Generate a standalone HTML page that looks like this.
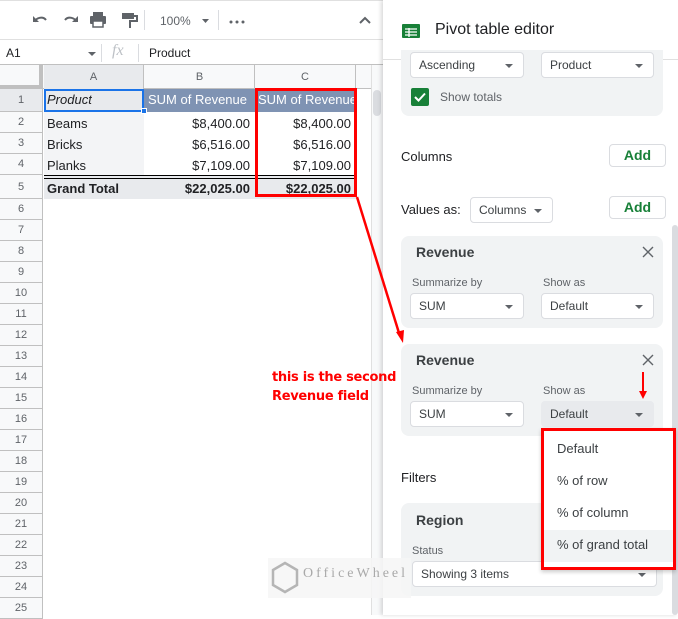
<!DOCTYPE html><html><head><style>
*{box-sizing:border-box;margin:0;padding:0}
body{width:678px;height:615px;overflow:hidden;background:#fff;font-family:"Liberation Sans",Arial,sans-serif;position:relative;color:#202124}
.a{position:absolute}
.rh{position:absolute;left:0;width:43px;background:#f8f9fa;border-bottom:1px solid #c0c0c0;border-right:1px solid #c0c0c0;color:#5f6368;font-size:11px;text-align:center}
.cell{position:absolute;font-size:13px;white-space:nowrap;overflow:hidden}
.dd{position:absolute;background:#fff;border:1px solid #dadce0;border-radius:4px;font-size:12px;color:#3c4043;padding-left:8px;line-height:24px}
.dd:after{content:"";position:absolute;right:10px;top:11px;border-left:4px solid transparent;border-right:4px solid transparent;border-top:4px solid #5f6368}
.card{position:absolute;left:401px;width:262px;background:#f1f3f4;border-radius:8px}
.lbl{position:absolute;font-size:11px;color:#5f6368}
.btn{position:absolute;border:1px solid #dadce0;border-radius:4px;color:#188038;font-size:14px;font-weight:bold;text-align:center;line-height:20px;background:#fff}
</style></head><body>
<!-- toolbar -->
<div class="a" style="left:0;top:0;width:383px;height:40px;border-bottom:1px solid #e0e0e0;border-top:1px solid #e0e0e0"></div>
<svg class="a" style="left:30px;top:10px" width="220" height="20" viewBox="0 0 220 20">
<path d="M5 12 a6 5 0 0 1 11 -2" fill="none" stroke="#5f6368" stroke-width="2"/><path d="M3 6v6h6" fill="#5f6368"/>
<path d="M46 12 a6 5 0 0 0 -11 -2" fill="none" stroke="#5f6368" stroke-width="2"/><path d="M48 6v6h-6" fill="#5f6368"/>
<rect x="60" y="6" width="16" height="8" rx="1" fill="#5f6368"/><rect x="63" y="2" width="10" height="4" fill="#5f6368"/><rect x="63" y="11" width="10" height="6" fill="#fff" stroke="#5f6368" stroke-width="1.5"/>
<rect x="92" y="3" width="12" height="6" fill="#5f6368"/><path d="M104 6h3v5h-7v7" fill="none" stroke="#5f6368" stroke-width="2"/>
<rect x="114" y="0" width="1" height="20" fill="#dadce0"/>
<text x="130" y="15" font-size="12" fill="#5f6368" font-family="Liberation Sans">100%</text>
<path d="M172 9h7l-3.5 4z" fill="#5f6368"/>
<rect x="188" y="0" width="1" height="20" fill="#dadce0"/>
<circle cx="201" cy="12" r="1.5" fill="#5f6368"/><circle cx="207" cy="12" r="1.5" fill="#5f6368"/><circle cx="213" cy="12" r="1.5" fill="#5f6368"/>
</svg>
<svg class="a" style="left:358px;top:15px" width="14" height="10"><path d="M2 8l5-5 5 5" fill="none" stroke="#5f6368" stroke-width="2"/></svg>
<!-- formula bar -->
<div class="a" style="left:0;top:41px;width:383px;height:24px;border-bottom:1px solid #c0c0c0"></div>
<div class="a" style="left:6px;top:46px;font-size:12px">A1</div>
<div class="a" style="left:88px;top:52px;border-left:4px solid transparent;border-right:4px solid transparent;border-top:4px solid #5f6368"></div>
<div class="a" style="left:101px;top:44px;width:1px;height:18px;background:#dadce0"></div>
<div class="a" style="left:112px;top:42px;font-size:16px;color:#bdc1c6;font-style:italic;font-family:'Liberation Serif',serif">fx</div>
<div class="a" style="left:138px;top:44px;width:1px;height:18px;background:#dadce0"></div>
<div class="a" style="left:149px;top:46px;font-size:12px">Product</div>
<!-- column headers -->
<div class="a" style="left:0;top:65px;width:371px;height:24px;background:#f8f9fa;border-bottom:1px solid #c0c0c0"></div>
<div class="a" style="left:0;top:65px;width:43px;height:24px;border-right:4px solid #c0c0c0;border-bottom:4px solid #c0c0c0;background:#f8f9fa"></div>
<div class="a" style="left:44px;top:65px;width:100px;height:24px;border-right:1px solid #c0c0c0;font-size:11px;color:#5f6368;text-align:center;line-height:24px;background:#e8eaed">A</div>
<div class="a" style="left:145px;top:65px;width:110px;height:24px;border-right:1px solid #c0c0c0;font-size:11px;color:#5f6368;text-align:center;line-height:24px">B</div>
<div class="a" style="left:255px;top:65px;width:101px;height:24px;border-right:1px solid #c0c0c0;font-size:11px;color:#5f6368;text-align:center;line-height:24px">C</div>
<!-- row numbers -->
<div class="rh" style="top:89px;height:23px;line-height:22px;background:#e8eaed">1</div>
<div class="rh" style="top:112px;height:21px;line-height:20px">2</div>
<div class="rh" style="top:133px;height:21px;line-height:20px">3</div>
<div class="rh" style="top:154px;height:21px;line-height:20px">4</div>
<div class="rh" style="top:175px;height:24px;line-height:24px">5</div>
<div class="rh" style="top:199px;height:21px;line-height:20px">6</div>
<div class="rh" style="top:220px;height:21px;line-height:20px">7</div>
<div class="rh" style="top:241px;height:21px;line-height:20px">8</div>
<div class="rh" style="top:262px;height:21px;line-height:20px">9</div>
<div class="rh" style="top:283px;height:21px;line-height:20px">10</div>
<div class="rh" style="top:304px;height:21px;line-height:20px">11</div>
<div class="rh" style="top:325px;height:21px;line-height:20px">12</div>
<div class="rh" style="top:346px;height:21px;line-height:20px">13</div>
<div class="rh" style="top:367px;height:21px;line-height:20px">14</div>
<div class="rh" style="top:388px;height:21px;line-height:20px">15</div>
<div class="rh" style="top:409px;height:21px;line-height:20px">16</div>
<div class="rh" style="top:430px;height:21px;line-height:20px">17</div>
<div class="rh" style="top:451px;height:21px;line-height:20px">18</div>
<div class="rh" style="top:472px;height:21px;line-height:20px">19</div>
<div class="rh" style="top:493px;height:21px;line-height:20px">20</div>
<div class="rh" style="top:514px;height:21px;line-height:20px">21</div>
<div class="rh" style="top:535px;height:21px;line-height:20px">22</div>
<div class="rh" style="top:556px;height:21px;line-height:20px">23</div>
<div class="rh" style="top:577px;height:21px;line-height:20px">24</div>
<div class="rh" style="top:598px;height:21px;line-height:20px">25</div>
<!-- table -->
<div class="a" style="left:44px;top:89px;width:100px;height:110px;background:#e8eaed"></div>
<div class="a" style="left:44px;top:112px;width:100px;height:63px;background:#f3f4f6"></div>
<div class="a" style="left:144px;top:89px;width:212px;height:23px;background:#7f93b3"></div>
<div class="a" style="left:144px;top:175px;width:212px;height:24px;background:#e8eaed"></div>
<div class="a" style="left:44px;top:175px;width:312px;height:4px;border-top:1px solid #000;border-bottom:1px solid #000"></div>
<div class="a" style="left:44px;top:89px;width:100px;height:23px;border:2px solid #1a73e8"></div>
<div class="a" style="left:141px;top:108px;width:6px;height:6px;background:#1a73e8;border:1px solid #fff"></div>
<div class="cell" style="left:47px;top:92px;font-style:italic">Product</div>
<div class="cell" style="left:148px;top:92px;color:#fff">SUM of Revenue</div>
<div class="cell" style="left:258px;top:92px;width:97px;color:#fff">SUM of Revenue</div>
<div class="cell" style="left:47px;top:116px">Beams</div>
<div class="cell" style="left:47px;top:137px">Bricks</div>
<div class="cell" style="left:47px;top:158px">Planks</div>
<div class="cell" style="left:145px;top:116px;width:105px;text-align:right">$8,400.00</div>
<div class="cell" style="left:145px;top:137px;width:105px;text-align:right">$6,516.00</div>
<div class="cell" style="left:145px;top:158px;width:105px;text-align:right">$7,109.00</div>
<div class="cell" style="left:255px;top:116px;width:96px;text-align:right">$8,400.00</div>
<div class="cell" style="left:255px;top:137px;width:96px;text-align:right">$6,516.00</div>
<div class="cell" style="left:255px;top:158px;width:96px;text-align:right">$7,109.00</div>
<div class="cell" style="left:47px;top:181px;font-weight:bold">Grand Total</div>
<div class="cell" style="left:145px;top:181px;width:105px;text-align:right;font-weight:bold">$22,025.00</div>
<div class="cell" style="left:255px;top:181px;width:96px;text-align:right;font-weight:bold">$22,025.00</div>
<!-- grid scrollbar -->
<div class="a" style="left:371px;top:65px;width:12px;height:550px;background:#f8f9fa;border-left:1px solid #e0e0e0"></div>
<div class="a" style="left:373px;top:90px;width:8px;height:26px;background:#dadce0;border-radius:4px"></div>
<!-- panel -->
<div class="a" style="left:383px;top:0;width:295px;height:615px;background:#fff;box-shadow:-2px 0 4px rgba(0,0,0,.15)"></div>
<div class="a" style="left:383px;top:59px;width:295px;height:1px;background:#e0e0e0"></div>
<svg class="a" style="left:402px;top:24px" width="18" height="14"><rect width="18" height="14" rx="1" fill="#188038"/><path d="M3 5h12M3 8h12M3 11h12M7 4v9" stroke="#fff" stroke-width="1.3"/></svg>
<div class="a" style="left:435px;top:21px;font-size:16px;color:#202124">Pivot table editor</div>
<div class="a" style="left:672px;top:225px;width:6px;height:390px;background:#dadce0;border-radius:3px"></div>
<div class="card" style="top:50px;height:66px;border-radius:0 0 8px 8px"></div>
<div class="dd" style="left:410px;top:52px;width:114px;height:26px">Ascending</div>
<div class="dd" style="left:541px;top:52px;width:113px;height:26px">Product</div>
<div class="a" style="left:411px;top:88px;width:18px;height:18px;background:#188038;border-radius:2px"></div>
<svg class="a" style="left:411px;top:88px" width="18" height="18"><path d="M4 9l3.5 3.5 6.5-7" fill="none" stroke="#fff" stroke-width="2"/></svg>
<div class="a" style="left:440px;top:90px;font-size:12px;color:#5f6368">Show totals</div>
<div class="a" style="left:401px;top:149px;font-size:13px">Columns</div>
<div class="btn" style="left:609px;top:144px;width:57px;height:23px">Add</div>
<div class="a" style="left:401px;top:202px;font-size:13px">Values as:</div>
<div class="dd" style="left:470px;top:197px;width:83px;height:26px">Columns</div>
<div class="btn" style="left:609px;top:196px;width:57px;height:23px">Add</div>
<div class="card" style="top:236px;height:92px"></div>
<div class="a" style="left:416px;top:244px;font-size:14px;font-weight:bold;color:#3c4043">Revenue</div>
<svg class="a" style="left:642px;top:246px" width="12" height="12"><path d="M1 1l10 10M11 1L1 11" stroke="#5f6368" stroke-width="1.4"/></svg>
<div class="lbl" style="left:412px;top:277px">Summarize by</div>
<div class="lbl" style="left:543px;top:277px">Show as</div>
<div class="dd" style="left:410px;top:293px;width:114px;height:26px">SUM</div>
<div class="dd" style="left:541px;top:293px;width:113px;height:26px">Default</div>
<div class="card" style="top:344px;height:92px"></div>
<div class="a" style="left:416px;top:352px;font-size:14px;font-weight:bold;color:#3c4043">Revenue</div>
<svg class="a" style="left:642px;top:354px" width="12" height="12"><path d="M1 1l10 10M11 1L1 11" stroke="#5f6368" stroke-width="1.4"/></svg>
<div class="lbl" style="left:412px;top:385px">Summarize by</div>
<div class="lbl" style="left:543px;top:385px">Show as</div>
<div class="dd" style="left:410px;top:401px;width:114px;height:26px">SUM</div>
<div class="dd" style="left:541px;top:401px;width:113px;height:26px;background:#e8eaed;border-color:#e8eaed">Default</div>
<div class="a" style="left:401px;top:470px;font-size:13px">Filters</div>
<div class="card" style="top:503px;height:93px"></div>
<div class="a" style="left:416px;top:512px;font-size:14px;font-weight:bold;color:#3c4043">Region</div>
<div class="lbl" style="left:412px;top:545px">Status</div>
<div class="dd" style="left:412px;top:561px;width:245px;height:26px">Showing 3 items</div>
<!-- dropdown menu -->
<div class="a" style="left:541px;top:428px;width:135px;height:142px;background:#fff;border:3px solid #f00;box-shadow:0 2px 4px rgba(0,0,0,.2)"></div>
<div class="a" style="left:544px;top:530px;width:129px;height:32px;background:#f1f3f4"></div>
<div class="a" style="left:557px;top:441px;font-size:13px;color:#3c4043">Default</div>
<div class="a" style="left:557px;top:473px;font-size:13px;color:#3c4043">% of row</div>
<div class="a" style="left:557px;top:505px;font-size:13px;color:#3c4043">% of column</div>
<div class="a" style="left:557px;top:537px;font-size:13px;color:#3c4043">% of grand total</div>
<!-- watermark -->
<div class="a" style="left:268px;top:558px;width:143px;height:40px;background:rgba(246,246,246,.85)"></div>
<div class="a" style="left:303px;top:566px;font-size:14px;color:#a9a9a9;letter-spacing:3px;font-family:'Liberation Serif',serif">OfficeWheel</div>
<svg class="a" style="left:270px;top:561px" width="30" height="34"><path d="M15 2l12 7v15l-12 7-12-7V9z" fill="none" stroke="#b5b5b5" stroke-width="2.5"/></svg>
<!-- red annotations -->
<div class="a" style="left:255px;top:88px;width:102px;height:109px;border:3px solid #f00"></div>
<svg class="a" style="left:0;top:0" width="678" height="615"><line x1="357" y1="197" x2="399" y2="333" stroke="#f00" stroke-width="2.5"/><path d="M396 332l7 11 1-13z" fill="#f00"/>
<line x1="643" y1="372" x2="643" y2="392" stroke="#f00" stroke-width="2"/><path d="M639 391h8l-4 8z" fill="#f00"/></svg>
<div class="a" style="left:272px;top:368px;font-size:13px;font-weight:bold;color:#f00;line-height:19px;font-family:'DejaVu Sans',sans-serif;letter-spacing:-0.3px;white-space:nowrap">this is the second<br>Revenue field</div>
</body></html>
